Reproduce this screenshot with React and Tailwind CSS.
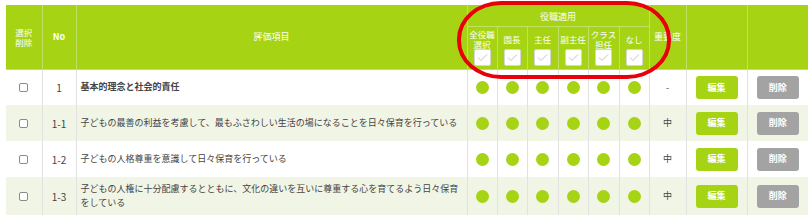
import React from "react";

const roles = ["全役職選択", "園長", "主任", "副主任", "クラス担任", "なし"];

const rows = [
  { no: "1", text: "基本的理念と社会的責任", bold: true, level: "-" },
  { no: "1-1", text: "子どもの最善の利益を考慮して、最もふさわしい生活の場になることを日々保育を行っている", level: "中" },
  { no: "1-2", text: "子どもの人格尊重を意識して日々保育を行っている", level: "中" },
  { no: "1-3", text: "子どもの人権に十分配慮するとともに、文化の違いを互いに尊重する心を育てるよう日々保育をしている", level: "中" },
];

const Check = () => (
  <div className="mx-auto w-[17px] h-[17px] bg-white rounded-[2px] border border-[#d6d6d6] flex items-center justify-center">
    <svg width="11" height="9" viewBox="0 0 11 9" fill="none">
      <path d="M1 4.5 L4 7.5 L10 1.5" stroke="#c4c4c4" strokeWidth="1" />
    </svg>
  </div>
);

const RoleLabel = ({ name }) => {
  // 長いものは2行
  const lines =
    name === "全役職選択" ? ["全役職", "選択"] : name === "クラス担任" ? ["クラス", "担任"] : [name];
  return (
    <div className="h-[20px] flex flex-col items-center justify-center leading-[10px] text-[8.5px]">
      {lines.map((l) => (
        <span key={l}>{l}</span>
      ))}
    </div>
  );
};

export default function App() {
  return (
    <div
      className="w-[810px] h-[217px] bg-white pt-[5px] pl-[6px] overflow-hidden"
      style={{ fontFamily: '"Noto Sans CJK JP", "Noto Sans", sans-serif' }}
    >
      <div className="relative w-[802px]">
        <table className="table-fixed border-collapse w-[802px] text-[9px] text-[#333]">
          <colgroup>
            <col className="w-[36px]" />
            <col className="w-[34px]" />
            <col className="w-[391px]" />
            <col className="w-[30px]" />
            <col className="w-[30px]" />
            <col className="w-[31px]" />
            <col className="w-[30px]" />
            <col className="w-[31px]" />
            <col className="w-[30px]" />
            <col className="w-[37px]" />
            <col className="w-[61px]" />
            <col className="w-[61px]" />
          </colgroup>
          <thead className="bg-[#a6d414] text-white">
            <tr className="h-[21px]">
              <th rowSpan={2} className="border border-[#c2e163] border-t-0 border-l-0 font-normal leading-[10px] text-[8.5px]">
                選択
                <br />
                削除
              </th>
              <th rowSpan={2} className="border border-[#c2e163] border-t-0 font-semibold text-[9px]">
                No
              </th>
              <th rowSpan={2} className="border border-[#c2e163] border-t-0 font-normal text-[9px]">
                評価項目
              </th>
              <th colSpan={6} className="border border-[#c2e163] border-t-0 font-normal text-[9px] pt-[3px]">
                役職適用
              </th>
              <th rowSpan={2} className="border border-[#c2e163] border-t-0 font-normal text-[9px]">
                重要度
              </th>
              <th rowSpan={2} className="border border-[#c2e163] border-t-0"></th>
              <th rowSpan={2} className="border border-[#c2e163] border-t-0 border-r-0"></th>
            </tr>
            <tr className="h-[43px]">
              {roles.map((r) => (
                <th key={r} className="border border-[#c2e163] font-normal align-top pt-[2px]">
                  <RoleLabel name={r} />
                  <Check />
                </th>
              ))}
            </tr>
          </thead>
          <tbody>
            {rows.map((row, i) => (
              <tr key={row.no} className={i % 2 === 1 ? "bg-[#f1f5e6]" : "bg-white"}>
                <td className={`border-r border-[#e2e2e2] text-center ${row.no === "1-3" ? "h-[38px]" : "h-[36px]"}`}>
                  <div className="mx-auto w-[9px] h-[9px] border border-[#8a8a8a] rounded-[2px] bg-white"></div>
                </td>
                <td className="border-r border-[#e2e2e2] text-center text-[10px] text-[#444]">{row.no}</td>
                <td
                  className={`border-r border-[#e2e2e2] pl-[4px] pr-[5px] leading-[14px] text-[#444] ${
                    row.bold ? "font-bold text-[#333]" : ""
                  }`}
                >
                  {row.text}
                </td>
                {roles.map((r) => (
                  <td key={r} className="border-r border-[#e2e2e2]">
                    <div className="mx-auto w-[13px] h-[13px] rounded-full bg-[#a6d414]"></div>
                  </td>
                ))}
                <td className="border-r border-[#e2e2e2] text-center text-[9px] text-[#444]">{row.level}</td>
                <td className="border-r border-[#e2e2e2]">
                  <button className="block mx-auto w-[42px] h-[23px] rounded-[3px] bg-[#a6d414] text-white text-[9px] font-bold">
                    編集
                  </button>
                </td>
                <td>
                  <button className="block mx-auto w-[42px] h-[23px] rounded-[3px] bg-[#a3a3a3] text-white text-[9px] font-bold">
                    削除
                  </button>
                </td>
              </tr>
            ))}
          </tbody>
        </table>
        {/* 赤い丸の注記 */}
        <div className="absolute left-[451px] top-[-4px] w-[214px] h-[78px] border-[4px] border-[#e8000b] rounded-[44px/38px] pointer-events-none"></div>
      </div>
    </div>
  );
}
